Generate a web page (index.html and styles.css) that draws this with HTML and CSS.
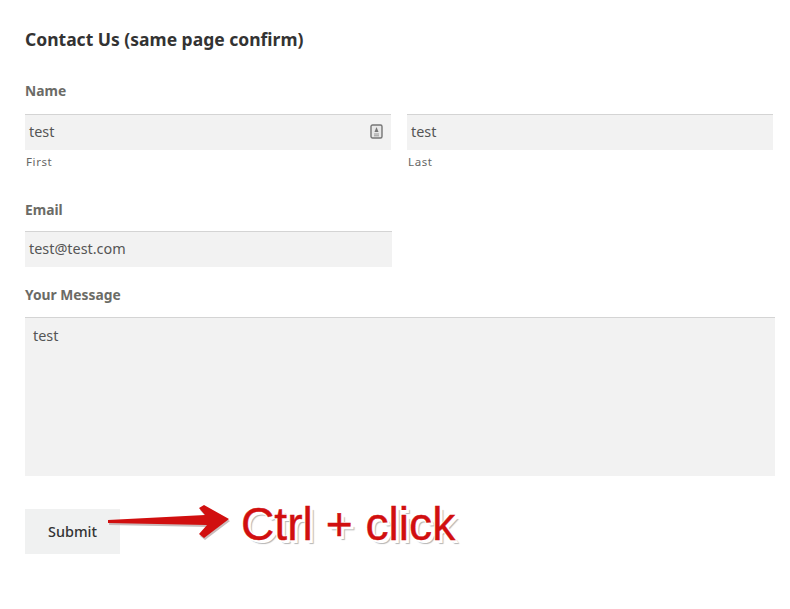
FILE: index.html
```html
<!DOCTYPE html>
<html lang="en">
<head>
    <meta charset="UTF-8">
    <title>Contact Us</title>
    <link rel="stylesheet" href="styles.css">
</head>
<body>
    <form class="contact-form">
        <h2 class="form-title">Contact Us (same page confirm)</h2>

        <div class="field field-name">
            <div class="field-label">Name</div>
            <div class="name-row">
                <div class="name-part">
                    <div class="input input-first">
                        <span>test</span>
                        <svg class="contact-icon" width="13" height="15" viewBox="0 0 13 15">
                            <rect x="1" y="1" width="11" height="13" rx="1.5" fill="#e8e8e8" stroke="#757575" stroke-width="1.4"/>
                            <path d="M6.5 3 L8.5 8 H4.5 Z" fill="#757575"/>
                            <path d="M4 10 H9 M4 11.8 H9" stroke="#999" stroke-width="1"/>
                        </svg>
                    </div>
                    <div class="sub-label">First</div>
                </div>
                <div class="name-part">
                    <div class="input input-last"><span>test</span></div>
                    <div class="sub-label">Last</div>
                </div>
            </div>
        </div>

        <div class="field field-email">
            <div class="field-label">Email</div>
            <div class="input input-email"><span>test@test.com</span></div>
        </div>

        <div class="field field-message">
            <div class="field-label">Your Message</div>
            <div class="textarea">test</div>
        </div>

        <div class="submit-button">Submit</div>
    </form>

    <!-- annotation pasted over the screenshot -->
    <svg class="arrow" width="130" height="44" viewBox="0 0 130 44">
        <path d="M0 15 L97 10 L91 3 L96 0 L121 14 L96 33 L91 29 L99 20 L0 18 Z" fill="#c9bcbc" transform="translate(1 2)"/>
        <path d="M0 15 L97 10 L91 3 L96 0 L121 14 L96 33 L91 29 L99 20 L0 18 Z" fill="#d10f0f"/>
    </svg>
    <div class="annotation">Ctrl + click</div>
</body>
</html>
```

FILE: styles.css
```css
body {
    margin: 0;
    background-color: #fff;
    font-family: "Noto Sans", "Open Sans", sans-serif;
    color: #555;
}

.contact-form {
    padding: 27px 15px 0 25px;
}

.form-title {
    margin: 0 0 30px;
    font-size: 17.5px;
    line-height: 24px;
    font-weight: 700;
    color: #333;
}

.field-label {
    font-size: 13.8px;
    line-height: 20px;
    font-weight: 700;
    color: #6b6b66;
    margin-bottom: 13px;
}

.name-row {
    display: flex;
    gap: 16px;
}

.name-part {
    flex: 0 0 366px;
}

.name-part + .name-part {
    margin-right: -1px;
}

.input {
    display: flex;
    justify-content: space-between;
    align-items: center;
    box-sizing: border-box;
    height: 36px;
    padding: 0 8px 2px 4px;
    background-color: #f2f2f2;
    border-top: 1px solid #d4d4d4;
    font-size: 14.4px;
}

.input-email {
    width: 367px;
}

.sub-label {
    margin-top: 3px;
    padding-left: 1px;
    font-size: 11.5px;
    line-height: 18px;
    letter-spacing: 0.6px;
    color: #666;
}

.field-email {
    margin-top: 29px;
}

.field-email .field-label {
    margin-bottom: 11px;
}

.field-message {
    margin-top: 18px;
}

.field-message .field-label {
    margin-bottom: 12px;
}

.textarea {
    box-sizing: border-box;
    height: 159px;
    padding: 8px;
    background-color: #f2f2f2;
    border-top: 1px solid #d4d4d4;
    font-size: 14.4px;
    line-height: 20px;
}

.submit-button {
    display: flex;
    align-items: center;
    justify-content: center;
    width: 95px;
    height: 45px;
    margin-top: 33px;
    background-color: #f0f1f1;
    font-size: 14.4px;
    font-weight: 500;
    color: #333;
}

.arrow {
    position: absolute;
    left: 108px;
    top: 505px;
}

.annotation {
    position: absolute;
    left: 241px;
    top: 497px;
    font-family: "Liberation Sans", Arial, sans-serif;
    font-size: 46.2px;
    line-height: 54px;
    color: #d10f0f;
    -webkit-text-stroke: 0.4px #d10f0f;
    text-shadow: 2px 0 0 #fff, -1px 0 0 #fff, 0 -1px 0 #fff, 0 2px 0 #fff, 2px 2px 0 #fff, 3px 3px 0 #fff, 4px 4px 1px #b5b5b5;
}
```
